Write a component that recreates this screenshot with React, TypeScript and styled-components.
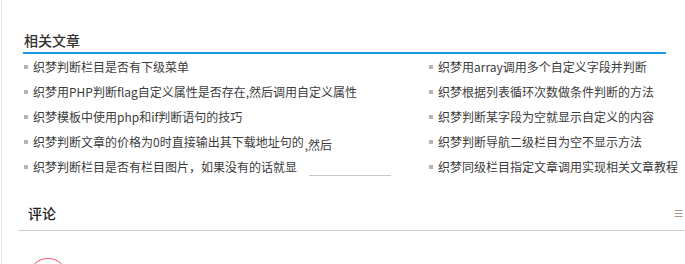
import React from 'react'
import styled, { createGlobalStyle } from 'styled-components'

const GlobalStyle = createGlobalStyle`
    html, body {
        margin: 0;
        padding: 0;
        background: #fff;
    }
    body {
        font-family: "Noto Sans CJK SC", "Open Sans", sans-serif;
        overflow: hidden;
    }
`

const related: { text: string; tail?: 'shift' | 'line'; extra?: string }[] = [
    { text: '织梦判断栏目是否有下级菜单' },
    { text: '织梦用array调用多个自定义字段并判断' },
    { text: '织梦用PHP判断flag自定义属性是否存在,然后调用自定义属性' },
    { text: '织梦根据列表循环次数做条件判断的方法' },
    { text: '织梦模板中使用php和if判断语句的技巧' },
    { text: '织梦判断某字段为空就显示自定义的内容' },
    { text: '织梦判断文章的价格为0时直接输出其下载地址句的', tail: 'shift', extra: ',然后' },
    { text: '织梦判断导航二级栏目为空不显示方法' },
    { text: '织梦判断栏目是否有栏目图片，如果没有的话就显', tail: 'line' },
    { text: '织梦同级栏目指定文章调用实现相关文章教程' },
]

export default function App() {
    return (
        <>
            <GlobalStyle />
            <Page>
                <Related>
                    <Heading>相关文章</Heading>
                    <List>
                        {related.map((item, i) => (
                            <Item key={i}>
                                {item.text}
                                {item.tail === 'shift' && <Shifted>{item.extra}</Shifted>}
                                {item.tail === 'line' && <Trail />}
                            </Item>
                        ))}
                    </List>
                </Related>
                <Comments>
                    <CommentHead>
                        <CommentTitle>评论</CommentTitle>
                        <Handle>≡</Handle>
                    </CommentHead>
                    <Avatar />
                </Comments>
            </Page>
        </>
    )
}

const Page = styled.div`
    height: 264px;
    margin-left: 1px;
    border-left: 1px solid #e3e3e3;
    overflow: hidden;
`

const Related = styled.section`
    padding: 0 19px 0 21px;
`

const Heading = styled.h3`
    margin: 0;
    padding: 30px 0 2px 1px;
    line-height: 20px;
    font-size: 14px;
    font-weight: 500;
    color: #333;
    border-bottom: 2px solid #1a9ae0;
`

const List = styled.ul`
    list-style: none;
    margin: 0;
    padding: 0;
    display: grid;
    grid-template-columns: 405px 1fr;
`

const Item = styled.li`
    position: relative;
    padding-left: 10px;
    line-height: 25px;
    height: 25px;
    font-size: 12px;
    color: #3c3c3c;
    white-space: nowrap;

    &::before {
        content: '';
        position: absolute;
        left: 1px;
        top: 11px;
        width: 4px;
        height: 4px;
        background: #b4b4b4;
    }
`

const Shifted = styled.span`
    display: inline-block;
    margin-left: 1px;
    transform: translateY(3px);
`

const Trail = styled.span`
    display: inline-block;
    width: 82px;
    margin-left: 12px;
    vertical-align: -4px;
    border-bottom: 1px solid #c8c8c8;
`

const Comments = styled.section`
    margin: 24px 0 0 16px;
`

const CommentHead = styled.div`
    display: flex;
    justify-content: space-between;
    align-items: center;
    padding: 0 0 7px 10px;
    border-bottom: 1px solid #cfcfcf;
`

const CommentTitle = styled.h3`
    margin: 0;
    line-height: 20px;
    font-size: 14px;
    font-weight: 500;
    color: #222;
`

const Handle = styled.span`
    font-size: 11px;
    line-height: 20px;
    color: #a08468;
    margin-right: 1px;
`

const Avatar = styled.div`
    width: 40px;
    height: 40px;
    margin: 27px 0 0 10px;
    border: 1px solid #e8506a;
    border-radius: 50%;
    box-sizing: border-box;
`
